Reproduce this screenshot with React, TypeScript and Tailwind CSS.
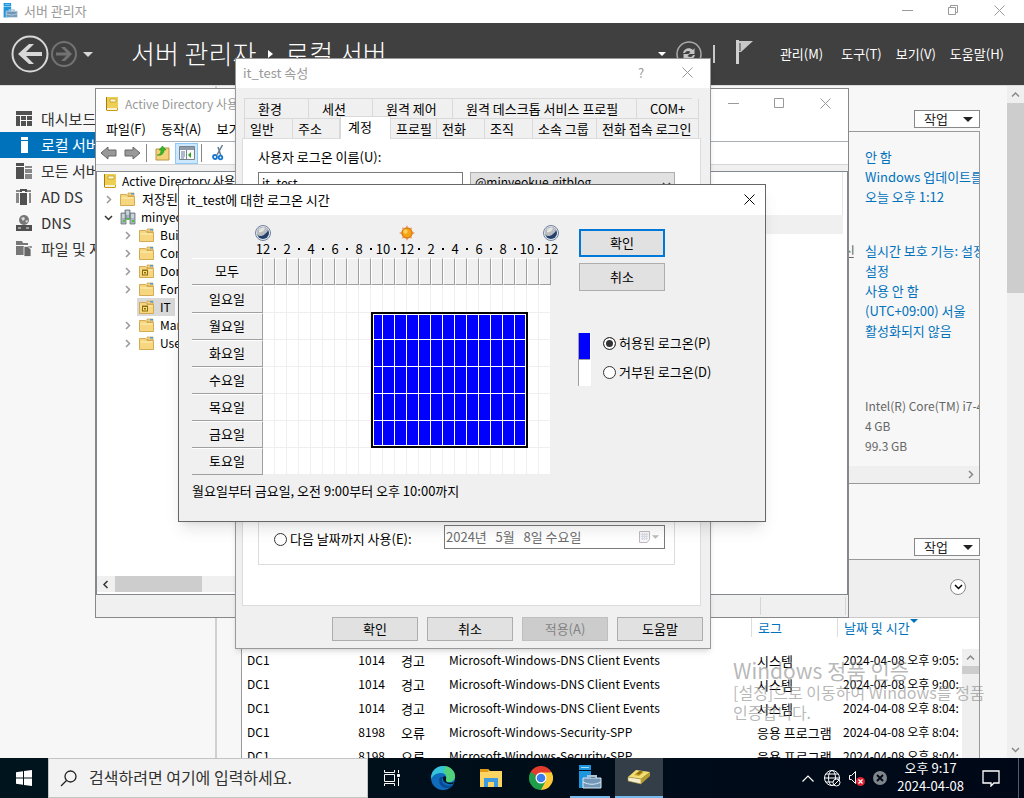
import type { ReactNode } from "react";

type IconProps = { className?: string };

function ServerManagerIcon({ className }: IconProps) {
  return (
    <svg viewBox="0 0 24 24" className={className} aria-hidden="true">
      <path d="M1 0h12v5H1zM1 6h12v7H9v10H1z" fill="#1e96de" />
      <path d="M3 2h8v1H3z" fill="#a9dcf6" />
      <path d="M5 13h18v10H5z" fill="#7197b8" stroke="#dce8f0" />
      <path d="M10 13v-2h8v2" fill="none" stroke="#a8c4d8" strokeWidth="2" />
      <path d="M5 17c6 3 12 3 18 0" fill="none" stroke="#dce8f0" />
    </svg>
  );
}

function BookIcon({ className }: IconProps) {
  return (
    <svg viewBox="0 0 14 16" className={className} aria-hidden="true">
      <path d="M1 1h12v13l-1 1H2l-1-1z" fill="#c99b12" />
      <path d="M2 1h11v11H2z" fill="#edcf56" />
      <path d="M5 3h6v3H5z" fill="#fff6c8" stroke="#b48a12" strokeWidth=".6" />
      <path d="M2 12h10v2H2z" fill="#f8f2d8" />
      <path d="M1 1h1v13H1z" fill="#a87c08" />
    </svg>
  );
}

function FolderIcon({ unit }: { unit?: boolean }) {
  return (
    <svg viewBox="0 0 15 14" className="h-3.5 w-[15px] shrink-0" aria-hidden="true">
      <path d="M8 1h6v3H8z" fill="#f3d27a" stroke="#c99b3c" strokeWidth=".7" />
      <path d="M11 1h3v1.500h-3z" fill="#4b9ae0" />
      <path d="M.5 2.500h6l1.500 2h6.500v9H.5z" fill="#f6d77f" stroke="#cfa347" strokeWidth=".9" />
      <path d="M1.500 5.500h12v1h-12z" fill="#fdeebd" />
      {unit && (
        <>
          <path d="M3 5.500h6v6H3z" fill="#8d6b08" />
          <path d="M4 7h4v3.500H4z" fill="#f3df84" />
          <path d="M5 8h2v1.500H5z" fill="#8d6b08" />
        </>
      )}
    </svg>
  );
}

function DomainIcon() {
  return (
    <svg viewBox="0 0 16 16" className="h-4 w-4 shrink-0" aria-hidden="true">
      <path d="M5 1h5v9H5zM1 4h5v11H1zM10 4h5v11h-5z" fill="#a8b4bb" stroke="#66757e" strokeWidth=".8" />
      <path d="M6 3h3M6 5h3M2 6h3M2 8h3M11 6h3M11 8h3" stroke="#eaf2f5" />
      <path d="M3 11h2v2H3zM12 11h2v2h-2zM7 9h2v2H7z" fill="#4bc72c" />
    </svg>
  );
}

function Caret({ className }: IconProps) {
  return (
    <svg viewBox="0 0 10 5" className={className} aria-hidden="true">
      <path d="M0 0h10L5 5z" fill="currentColor" />
    </svg>
  );
}

function Chevron({ className, d }: { className?: string; d: "up" | "down" | "left" | "right" }) {
  const paths = {
    up: "M1 6.500 4.500 3 8 6.500",
    down: "M1 3 4.500 6.500 8 3",
    left: "M6.500 1 3 4.500 6.500 8",
    right: "M3 1 6.500 4.500 3 8",
  };
  return (
    <svg viewBox="0 0 9 9" className={`h-[9px] w-[9px] shrink-0 ${className ?? ""}`} aria-hidden="true">
      <path d={paths[d]} fill="none" stroke="currentColor" strokeWidth="1.500" />
    </svg>
  );
}

function CaptionGlyph({ kind }: { kind: "min" | "max" | "restore" | "close" }) {
  const paths = {
    min: "M0 5.500h11",
    max: "M.5.500h9v9h-9z",
    restore: "M.5 2.500h7v7h-7zM2.500 2.500v-2h7v7h-2",
    close: "M.5.500l10 10M10.500.500l-10 10",
  };
  return (
    <svg viewBox="0 0 11 11" className="h-[11px] w-[11px]" aria-hidden="true">
      <path d={paths[kind]} fill="none" stroke="currentColor" />
    </svg>
  );
}

function CaptionButton({ label, kind }: { label: string; kind: "min" | "max" | "restore" | "close" }) {
  return (
    <button type="button" aria-label={label} className="flex h-full w-[46px] items-center justify-center">
      <CaptionGlyph kind={kind} />
    </button>
  );
}

function PushButton({
  children,
  primary,
  disabled,
  className,
}: {
  children: ReactNode;
  primary?: boolean;
  disabled?: boolean;
  className: string;
}) {
  return (
    <button
      type="button"
      disabled={disabled}
      className={`w-[86px] pb-0.5 ${
        primary
          ? "border-2 border-[#0078d7] bg-[#e1e1e1]"
          : disabled
            ? "border border-[#bfbfbf] bg-[#cccccc] text-[#838383]"
            : "border border-[#adadad] bg-[#e1e1e1]"
      } ${className}`}
    >
      {children}
    </button>
  );
}

function Radio({ id, name, label, checked }: { id: string; name: string; label: string; checked?: boolean }) {
  return (
    <div className="flex items-center gap-[3px]">
      <input
        type="radio"
        id={id}
        name={name}
        defaultChecked={checked}
        className="h-[13px] w-[13px] appearance-none rounded-full border border-[#333] bg-white checked:bg-[#333] checked:shadow-[inset_0_0_0_2px_white]"
      />
      <label htmlFor={id} className="pb-0.5">
        {label}
      </label>
    </div>
  );
}

/* ---------- server manager ---------- */

const sideIcons: Record<string, ReactNode> = {
  dashboard: <path d="M0 0h16v4H0zM0 5h4v10H0zM5 5h5v4H5zM11 5h5v4h-5zM5 10h5v5H5zM11 10h5v5h-5z" />,
  local: <path d="M5 0h7v3H5zM5 4h7v12H5z" />,
  all: (
    <>
      <path d="M0 0h8v3H0zM0 4h8v12H0z" />
      <path d="M9 3h7v2H9zM9 6h7v4H9zM9 11h7v5H9z" fill="#888" />
    </>
  ),
  ad: (
    <>
      <path d="M0 1h5v2H0zM0 4h3v10H0zM11 1h4v2h-4zM13 4h2v10h-2z" fill="#888" />
      <path d="M4 3V0h7v3H9V2H6v1zM4 4h7v12H4z" />
    </>
  ),
  dns: (
    <>
      <circle cx="8" cy="5" r="5" fill="#777" />
      <path d="M5 3l3-1 1 2-2 2zM9 6l3-1-1 3z" fill="#ddd" />
      <path d="M0 10h16v6H0z" />
      <path d="M2 13h3M10 13h3" stroke="#eee" />
    </>
  ),
  files: (
    <>
      <path d="M0 0h6l1 2h5v2H0zM0 5h8v9H0z" fill="#777" />
      <path d="M9 5h7v2h-2v7H9z" fill="#999" />
      <path d="M8 5.500h4l3 3v7H8z" fill="#666" stroke="#f7f7f7" strokeWidth=".8" />
    </>
  ),
};

const sideItems = [
  { icon: "dashboard", label: "대시보드" },
  { icon: "local", label: "로컬 서버", active: true },
  { icon: "all", label: "모든 서버" },
  { icon: "ad", label: "AD DS" },
  { icon: "dns", label: "DNS" },
  { icon: "files", label: "파일 및 저" },
];

const propertyGroups = [
  { lead: "", link: true, rows: ["안 함", "Windows 업데이트를", "오늘 오후 1:12"] },
  { lead: "신", link: true, rows: ["실시간 보호 기능: 설정", "설정", "사용 안 함", "(UTC+09:00) 서울", "활성화되지 않음"] },
  { lead: "", link: false, rows: ["Intel(R) Core(TM) i7-4", "4 GB", "99.3 GB"] },
];

const events = [
  { id: 1014, level: "경고", source: "Microsoft-Windows-DNS Client Events", log: "시스템", time: "2024-04-08 오후 9:05:" },
  { id: 1014, level: "경고", source: "Microsoft-Windows-DNS Client Events", log: "시스템", time: "2024-04-08 오후 9:00:" },
  { id: 1014, level: "경고", source: "Microsoft-Windows-DNS Client Events", log: "시스템", time: "2024-04-08 오후 8:04:" },
  { id: 8198, level: "오류", source: "Microsoft-Windows-Security-SPP", log: "응용 프로그램", time: "2024-04-08 오후 8:04:" },
  { id: 8198, level: "오류", source: "Microsoft-Windows-Security-SPP", log: "응용 프로그램", time: "2024-04-08 오후 8:04:" },
];

function TaskMenu() {
  return (
    <button
      type="button"
      className="flex h-[18px] w-[66px] items-center justify-between self-end border border-[#888] bg-white pr-[6px] pl-[9px] text-[#222]"
    >
      <span className="pb-0.5">작업</span>
      <Caret className="h-[5px] w-2.5" />
    </button>
  );
}

function ServerManagerHeader() {
  return (
    <header className="flex h-[62px] shrink-0 items-center bg-[#404040] pr-5 pl-[11px] text-white">
      <button type="button" aria-label="뒤로">
        <svg viewBox="0 0 38 38" className="h-[38px] w-[38px]" aria-hidden="true">
          <circle cx="19" cy="19" r="17.500" fill="none" stroke="#d8d8d8" strokeWidth="2" />
          <path d="M7 19 18 9h5l-8 8h16v4H15l8 8h-5z" fill="#d8d8d8" />
        </svg>
      </button>
      <button type="button" aria-label="앞으로" className="ml-0.5">
        <svg viewBox="0 0 26 26" className="h-[26px] w-[26px]" aria-hidden="true">
          <circle cx="13" cy="13" r="12" fill="none" stroke="#727272" strokeWidth="2" />
          <path d="M21 13 14 6h-4l5.500 5.500H5v3h10.500L10 20h4z" fill="#727272" />
        </svg>
      </button>
      <Caret className="ml-1.5 h-[5px] w-2.5 text-[#d8d8d8]" />
      <h1 className="ml-[38px] flex items-center gap-3 pb-1 text-[26px] font-light whitespace-nowrap">
        서버 관리자
        <svg viewBox="0 0 5 8" className="mt-1 h-2 w-[5px]" aria-hidden="true">
          <path d="M0 0l5 4-5 4z" fill="white" />
        </svg>
        로컬 서버
      </h1>
      <div className="ml-auto flex items-center">
        <Caret className="h-1 w-2" />
        <svg viewBox="0 0 26 26" className="ml-2.5 h-[26px] w-[26px]" aria-hidden="true">
          <circle cx="13" cy="13" r="12" fill="none" stroke="#aaa" strokeWidth="1.500" />
          <path d="M7 12c1-5 7-6 10-3l1.500-2v6h-6l2-2c-2-2-5-1-5.500 1zM19 14c-1 5-7 6-10 3l-1.500 2v-6h6l-2 2c2 2 5 1 5.500-1z" fill="#c4c4c4" />
        </svg>
        <span className="ml-[11px] h-[18px] w-0.5 bg-[#c8c8c8]" />
        <svg viewBox="0 0 18 24" className="mb-1 ml-[21px] h-6 w-[18px]" aria-hidden="true">
          <path d="M0 0h3v24H0z" fill="#d0d0d0" />
          <path d="M3 1h14L5 12H3z" fill="#c8c8c8" />
          <path d="M4 3v8" stroke="#404040" />
        </svg>
        <nav className="ml-[26px] flex gap-3.5 pb-0.5 whitespace-nowrap">
          <button type="button" className="mr-1">관리(M)</button>
          <button type="button">도구(T)</button>
          <button type="button">보기(V)</button>
          <button type="button">도움말(H)</button>
        </nav>
      </div>
    </header>
  );
}

function ServerManager() {
  return (
    <section className="flex h-full flex-col overflow-hidden bg-[#f7f7f7]">
      <div className="flex h-[23px] shrink-0 items-center bg-white pr-0.5 pb-0.5 pl-[3px] text-[#999]">
        <ServerManagerIcon className="h-[15px] w-[15px]" />
        <span className="ml-1.5">서버 관리자</span>
        <div className="ml-auto flex h-full">
          <CaptionButton label="최소화" kind="min" />
          <CaptionButton label="이전 크기로" kind="restore" />
          <CaptionButton label="닫기" kind="close" />
        </div>
      </div>
      <ServerManagerHeader />
      <div className="flex min-h-0 flex-1 border-t border-[#ddd]">
        <nav className="w-[217px] shrink-0 border-r-2 border-[#d0d0d0] pt-5 text-[15px]">
          {sideItems.map((item) => (
            <a
              key={item.label}
              href="#"
              className={`flex h-[26px] items-center gap-[9px] pl-4 whitespace-nowrap ${
                item.active ? "bg-[#0072bc] text-white" : "text-[#333]"
              }`}
            >
              <svg
                viewBox="0 0 16 16"
                className={`h-4 w-4 shrink-0 ${item.active ? "fill-white" : "fill-[#505050]"}`}
                aria-hidden="true"
              >
                {sideIcons[item.icon]}
              </svg>
              <span className="pb-0.5">{item.label}</span>
            </a>
          ))}
        </nav>

        <main className="flex min-w-0 flex-1 flex-col overflow-hidden pt-6 pr-[27px] pl-6">
          <TaskMenu />
          <div className="mt-[3px] flex h-[353px] shrink-0 flex-col border border-[#999]">
            <div className="flex flex-1 flex-col items-end overflow-hidden pt-[15px] leading-5">
              {propertyGroups.map((group, i) => (
                <div key={i} className={`flex w-[136px] ${i === 1 ? "mt-[34px] mb-[55px]" : ""}`}>
                  <span className="w-[22px] shrink-0 text-[#666]">{group.lead}</span>
                  <div className={`whitespace-nowrap ${group.link ? "text-[#0072bc]" : "text-xs leading-5 text-[#666]"}`}>
                    {group.rows.map((row) => (
                      <p key={row}>{row}</p>
                    ))}
                  </div>
                </div>
              ))}
            </div>
            <div className="flex h-[17px] shrink-0 items-center justify-end bg-[#efefef] pr-1">
              <Chevron d="right" className="text-[#888]" />
            </div>
          </div>

          <div className="mt-[54px] flex flex-col">
            <TaskMenu />
          </div>
          <div className="relative mt-[3px] flex-1 border border-b-0 border-[#999] bg-white">
            <div className="flex h-[58px] items-center justify-end border-b border-[#c8c8c8] bg-[#efefef] pr-[13px] pb-1">
              <button
                type="button"
                aria-label="펼치기"
                className="flex h-4 w-4 items-center justify-center rounded-full border border-[#888] bg-white"
              >
                <Chevron d="down" />
              </button>
            </div>
            <table className="w-full table-fixed text-left whitespace-nowrap">
              <colgroup>
                <col className="w-[60px]" />
                <col className="w-[83px]" />
                <col className="w-12" />
                <col />
                <col className="w-[86px]" />
                <col className="w-[152px]" />
              </colgroup>
              <thead className="text-[#0072bc]">
                <tr className="h-[31px] align-top">
                  <th />
                  <th />
                  <th />
                  <th />
                  <th className="pl-2.5 font-normal">
                    <span className="block border-l border-[#ddd] pl-1.5">로그</span>
                  </th>
                  <th className="pl-2.5 font-normal">
                    <span className="flex border-l border-[#ddd] pl-1.5">
                      날짜 및 시간
                      <Caret className="mt-px h-1 w-2" />
                    </span>
                  </th>
                </tr>
              </thead>
              <tbody>
                {events.map((event, i) => (
                  <tr key={i} className="h-6 *:pb-0.5">
                    <td className="pl-[5px] text-xs">DC1</td>
                    <td className="text-right text-xs">{event.id}</td>
                    <td className="pl-4">{event.level}</td>
                    <td className="pl-4 text-xs">{event.source}</td>
                    <td className="pl-4">{event.log}</td>
                    <td className="overflow-hidden pl-4 text-xs">{event.time}</td>
                  </tr>
                ))}
              </tbody>
            </table>
            <div className="absolute top-[89px] right-0 bottom-0 flex w-[17px] flex-col items-center bg-[#efefef]">
              <Chevron d="up" className="my-1 text-[#888]" />
              <span className="h-2 w-full bg-[#cdcdcd]" />
            </div>
          </div>
        </main>

        <div className="flex w-[17px] shrink-0 flex-col items-center bg-[#efefef]">
          <Chevron d="up" className="my-1 text-[#888]" />
          <span className="h-[190px] w-full bg-[#cdcdcd]" />
          <Chevron d="down" className="mt-auto mb-1 text-[#888]" />
        </div>
      </div>
    </section>
  );
}

/* ---------- active directory console ---------- */

const containers = [
  { label: "Builtin" },
  { label: "Computers" },
  { label: "Domain Controllers", unit: true },
  { label: "ForeignSecurityPrincipals" },
  { label: "IT", unit: true, selected: true },
  { label: "Managed Service Accounts" },
  { label: "Users" },
];

function ConsoleToolbar() {
  return (
    <div className="flex h-[23px] shrink-0 items-center border-b border-[#d5d5d5] pl-1">
      <svg viewBox="0 0 18 16" className="h-4 w-[18px]" aria-hidden="true">
        <path d="M1 8l7-6v3h8v6H8v3z" fill="#999" stroke="#666" />
      </svg>
      <svg viewBox="0 0 18 16" className="ml-[5px] h-4 w-[18px]" aria-hidden="true">
        <path d="M17 8l-7-6v3H2v6h8v3z" fill="#999" stroke="#666" />
      </svg>
      <span className="ml-[5px] h-[18px] w-px bg-[#888]" />
      <svg viewBox="0 0 16 16" className="ml-2 h-4 w-4" aria-hidden="true">
        <path d="M1 4h6l1-1h6v12H1z" fill="#f3d27a" stroke="#bf9440" />
        <path d="M2 10c3 0 4-2 4-5H4l3.500-4L11 5H9c0 4-3 6-7 5z" fill="#35b52a" stroke="#1d861a" strokeWidth=".5" />
      </svg>
      <span className="ml-1 flex h-[21px] w-[23px] items-center justify-center border border-[#90c8f6] bg-[#cce8ff]">
        <svg viewBox="0 0 16 14" className="h-3.5 w-4" aria-hidden="true">
          <path d="M.5.500h15v13H.5z" fill="#f8f8f8" stroke="#7a828c" />
          <path d="M1 1h14v3H1z" fill="#8e9aa8" />
          <path d="M2 6h4M2 8h4M2 10h4M2 12h3" stroke="#5c7ea8" />
          <path d="M7.500 4v9" stroke="#7a828c" />
          <path d="M12 6v6L9 9z" fill="#32a31f" />
        </svg>
      </span>
      <span className="ml-[3px] h-[18px] w-px bg-[#888]" />
      <svg viewBox="0 0 12 16" className="ml-2.5 h-4 w-3" aria-hidden="true">
        <path d="M10.500 0 5 10M6 2l3 9" stroke="#667c92" strokeWidth="1.500" />
        <circle cx="3" cy="12" r="2" fill="none" stroke="#1877d0" strokeWidth="1.800" />
        <circle cx="8.500" cy="12.500" r="1.800" fill="none" stroke="#1877d0" strokeWidth="1.800" />
      </svg>
      <span className="ml-[11px] h-[18px] w-px bg-[#888]" />
    </div>
  );
}

function DirectoryWindow() {
  return (
    <section className="absolute top-[88px] left-[95px] flex h-[530px] w-[754px] flex-col border border-[#888] bg-[#f0f0f0]">
      <div className="flex h-[29px] shrink-0 items-center bg-white pl-[9px] text-[#999]">
        <BookIcon className="h-4 w-3.5" />
        <span className="ml-1.5 text-xs">Active Directory 사용자</span>
        <div className="ml-auto flex h-full">
          <CaptionButton label="최소화" kind="min" />
          <CaptionButton label="최대화" kind="max" />
          <CaptionButton label="닫기" kind="close" />
        </div>
      </div>
      <nav className="flex h-6 shrink-0 items-center gap-[15px] border-b border-[#a8b0b8] bg-white pb-0.5 pl-2.5">
        <button type="button">파일(F)</button>
        <button type="button">동작(A)</button>
        <button type="button">보기</button>
      </nav>
      <div className="shrink-0 bg-white">
        <ConsoleToolbar />
      </div>
      <div className="mt-1.5 flex min-h-0 flex-1 border-y border-[#828790] bg-white">
        <div className="flex w-[200px] shrink-0 flex-col overflow-hidden border-x border-[#828790] pb-0.5">
          <ul className="flex-1 text-xs whitespace-nowrap *:h-[18px]">
            <li className="flex items-center gap-[5px] pl-1.5">
              <BookIcon className="h-4 w-3.5 shrink-0" />
              Active Directory 사용자
            </li>
            <li className="flex items-center gap-[7px] pl-[7px] text-[13px]">
              <Chevron d="right" className="text-[#999]" />
              <FolderIcon />
              저장된 쿼리
            </li>
            <li className="flex items-center gap-[7px] pl-[7px]">
              <Chevron d="down" className="text-[#333]" />
              <DomainIcon />
              <span className="-ml-0.5">minyeokue</span>
            </li>
            {containers.map((item) => (
              <li key={item.label} className="flex items-center pl-[26px]">
                <Chevron d="right" className={item.selected ? "invisible" : "text-[#999]"} />
                <span
                  className={`ml-[5px] flex h-full items-center gap-1.5 pr-1 pl-0.5 ${
                    item.selected ? "bg-[#d9d9d9]" : ""
                  }`}
                >
                  <FolderIcon unit={item.unit} />
                  {item.label}
                </span>
              </li>
            ))}
          </ul>
          <div className="flex h-4 shrink-0 items-center bg-[#f0f0f0] pl-1">
            <Chevron d="left" className="text-[#333]" />
            <span className="ml-[5px] h-full w-[87px] bg-[#cdcdcd]" />
          </div>
        </div>
        <div className="flex-1 border-r border-[#828790]">
          <div className="mr-1 h-[43px] border-r border-[#e5e5e5]" />
          <div className="mr-1 h-[19px] bg-[#f0f0f0]" />
        </div>
      </div>
      <div className="flex h-[22px] shrink-0 justify-end py-0.5 pr-0.5">
        <span className="w-[86px] border-x border-[#d5d5d5]" />
      </div>
    </section>
  );
}

/* ---------- user properties ---------- */

const backTabs = [
  { label: "환경", width: "w-16" },
  { label: "세션", width: "w-16" },
  { label: "원격 제어", width: "w-20" },
  { label: "원격 데스크톱 서비스 프로필", width: "w-[184px]" },
  { label: "COM+", width: "w-[62px]" },
];

const frontTabs = [
  { label: "일반", width: "w-12" },
  { label: "주소", width: "w-[47px]" },
  { label: "계정", width: "w-[51px]", active: true },
  { label: "프로필", width: "w-[46px]" },
  { label: "전화", width: "w-12" },
  { label: "조직", width: "w-12" },
  { label: "소속 그룹", width: "w-16" },
  { label: "전화 접속 로그인", width: "w-[102px]" },
];

function PropertiesDialog() {
  return (
    <section className="absolute top-[58px] left-[235px] flex h-[591px] w-[476px] flex-col border border-[#999] bg-[#f0f0f0] shadow-md">
      <div className="flex h-[29px] shrink-0 items-center bg-white pb-0.5 pl-[7px] text-[#999]">
        it_test 속성
        <div className="ml-auto flex h-full">
          <button type="button" aria-label="도움말" className="w-[46px]">?</button>
          <CaptionButton label="닫기" kind="close" />
        </div>
      </div>

      <div className="flex min-h-0 flex-1 flex-col px-1.5 pt-2.5 pb-[7px]">
        <div className="mr-3 ml-0.5 flex h-5 shrink-0 border-t border-l border-[#d9d9d9]">
          {backTabs.map((tab) => (
            <button
              key={tab.label}
              type="button"
              className={`shrink-0 border-r border-[#d9d9d9] pb-0.5 pl-[13px] text-left whitespace-nowrap ${tab.width}`}
            >
              {tab.label}
            </button>
          ))}
        </div>
        <div className="mr-3 ml-0.5 flex h-5 shrink-0 items-end border-l border-[#d9d9d9]">
          {frontTabs.map((tab) => (
            <button
              key={tab.label}
              type="button"
              className={`relative shrink-0 border-t border-r border-[#d9d9d9] text-left whitespace-nowrap ${tab.width} ${
                tab.active ? "-mb-px h-[23px] border-l bg-white pb-1.5 pl-[7px]" : "h-5 pb-0.5 pl-[5px]"
              }`}
            >
              {tab.label}
            </button>
          ))}
        </div>

        <div className="mr-[3px] flex min-h-0 flex-1 flex-col border border-[#dcdcdc] bg-white px-[15px] pt-2 pb-10">
          <label htmlFor="logon-name">사용자 로그온 이름(U):</label>
          <div className="mt-1.5 flex gap-[7px]">
            <input
              id="logon-name"
              type="text"
              defaultValue="it_test"
              className="h-6 w-[205px] border border-[#7a7a7a] px-[3px] pb-1 text-xs"
            />
            <div className="relative w-[205px]">
              <select
                aria-label="도메인"
                className="h-6 w-full appearance-none border border-[#adadad] bg-[#e1e1e1] px-1 pb-1 text-xs"
              >
                <option>@minyeokue.gitblog</option>
              </select>
              <Chevron d="down" className="absolute top-2 right-1 text-[#444]" />
            </div>
          </div>
          <div className="mt-auto flex h-16 w-[417px] items-start justify-between border border-t-0 border-[#dcdcdc] pt-6 pr-[9px] pl-[15px]">
            <div className="pt-1">
              <Radio id="expires-on" name="expires" label="다음 날짜까지 사용(E):" />
            </div>
            <div className="flex h-6 w-[221px] items-center border border-[#7a7a7a] pr-[5px]">
              <input
                type="text"
                aria-label="만료 날짜"
                disabled
                defaultValue={"2024년   5월   8일 수요일"}
                className="min-w-0 flex-1 px-px pb-0.5 text-[#6d6d6d]"
              />
              <svg viewBox="0 0 12 13" className="h-[13px] w-3" aria-hidden="true">
                <path d="M.5.500h10v8l-2.500 3H.5z" fill="#f6f6fa" stroke="#c3b9bd" />
                <path d="M2 3.500h7M2 5.500h7M2 7.500h7M3.500 2v7M5.500 2v7M7.500 2v7" stroke="#d3d5df" strokeWidth=".7" />
              </svg>
              <Caret className="ml-px h-1 w-[7px] text-[#bbb]" />
            </div>
          </div>
        </div>

        <div className="mt-[11px] flex shrink-0 justify-end gap-[9px] pr-px">
          <PushButton className="h-6">확인</PushButton>
          <PushButton className="h-6">취소</PushButton>
          <PushButton className="h-6" disabled>
            적용(A)
          </PushButton>
          <PushButton className="h-6">도움말</PushButton>
        </div>
      </div>
    </section>
  );
}

/* ---------- logon hours ---------- */

const days = ["일요일", "월요일", "화요일", "수요일", "목요일", "금요일", "토요일"];
const hours = Array.from({ length: 24 }, (_, i) => i);
const hourLabels = Array.from({ length: 25 }, (_, i) => (i % 2 ? "·" : String(i % 12 || 12)));

function isAllowed(day: number, hour: number) {
  return day >= 1 && day <= 5 && hour >= 9 && hour < 22;
}

function MoonIcon() {
  return (
    <svg viewBox="0 0 16 16" className="h-4 w-4" aria-hidden="true">
      <circle cx="8" cy="8" r="7.500" fill="#e5edf6" stroke="#71819c" />
      <circle cx="8" cy="8" r="6" fill="#263f6b" />
      <path d="M2.200 9.500C.5 4 6 0 11 2.500c3 2 2.500 4-1 6.500-2 2-5 3-7.800.500z" fill="#b9bdc0" />
      <path d="M4 5c1-2 4-3 6-2-1 3-3 5-6 4z" fill="#e3e3df" />
    </svg>
  );
}

function SunIcon() {
  return (
    <svg viewBox="0 0 16 16" className="h-4 w-4" aria-hidden="true">
      <path
        d="M8 0l1.500 3L13 2.500 12.500 6 16 8l-3.500 2 .5 3.500-3.500-.5L8 16l-1.500-3-3.500.5.5-3.500L0 8l3.500-2L3 2.500l3.500.5z"
        fill="#efa36b"
      />
      <circle cx="8" cy="8" r="5" fill="#f5a312" stroke="#c9730d" />
      <circle cx="6.500" cy="6.500" r="2.200" fill="#ffcf55" />
    </svg>
  );
}

function DayButton({ children, className }: { children: ReactNode; className: string }) {
  return (
    <button
      type="button"
      className={`block w-full border-t border-r border-b border-t-white border-r-[#a0a0a0] border-b-[#a0a0a0] pb-0.5 ${className}`}
    >
      {children}
    </button>
  );
}

function HoursGrid() {
  return (
    <div className="w-[359px] shrink-0">
      <div className="-mr-2 ml-[63px] flex justify-between">
        <MoonIcon />
        <SunIcon />
        <MoonIcon />
      </div>
      <div className="-mr-1.5 ml-[65px] flex leading-[15px]">
        {hourLabels.map((label, i) => (
          <span key={i} className="flex h-[17px] w-3 shrink-0 justify-center">
            {label === "·" ? <i className="mt-[7px] h-0.5 w-0.5 bg-black" /> : label}
          </span>
        ))}
      </div>
      <div className="relative">
        <table className="w-full table-fixed border-collapse">
          <colgroup>
            <col className="w-[71px]" />
          </colgroup>
          <tbody>
            <tr>
              <th className="p-0 font-normal">
                <DayButton className="h-[27px]">모두</DayButton>
              </th>
              {hours.map((hour) => (
                <td key={hour} className="p-0">
                  <button
                    type="button"
                    aria-label={`${hour}시`}
                    className="block h-[27px] w-3 border border-t-white border-r-[#a0a0a0] border-b-[#a0a0a0] border-l-white"
                  />
                </td>
              ))}
            </tr>
            {days.map((day, d) => (
              <tr key={day}>
                <th className="p-0 font-normal">
                  <DayButton className={d === 0 ? "h-7" : "h-[27px]"}>{day}</DayButton>
                </th>
                {hours.map((hour) => (
                  <td key={hour} className="p-0">
                    <span
                      className={`block w-3 border-r border-b ${d === 0 ? "h-7" : "h-[27px]"} ${
                        isAllowed(d, hour) ? "border-white bg-[#0000ff]" : "border-[#efefef] bg-white"
                      }`}
                    />
                  </td>
                ))}
              </tr>
            ))}
          </tbody>
        </table>
        {/* selection frame, Mon-Fri 9:00-22:00 */}
        <span className="absolute top-[54px] left-[179px] h-[136px] w-[157px] border-2 border-black">
          <span className="block h-full border border-white" />
        </span>
      </div>
      <p className="mt-1.5 whitespace-nowrap">월요일부터 금요일, 오전 9:00부터 오후 10:00까지</p>
    </div>
  );
}

function LogonHoursDialog() {
  return (
    <section className="absolute top-[184px] left-[178px] flex h-[338px] w-[588px] flex-col border border-[#666] bg-[#f0f0f0] shadow-lg">
      <div className="flex h-[30px] shrink-0 items-center justify-between bg-white pb-0.5 pl-2">
        it_test에 대한 로그온 시간
        <button type="button" aria-label="닫기" className="flex h-full items-center px-2.5">
          <CaptionGlyph kind="close" />
        </button>
      </div>
      <div className="flex pt-2.5 pl-[13px]">
        <HoursGrid />
        <div className="ml-7 flex flex-col gap-1.5 pt-1">
          <PushButton primary className="h-7">
            확인
          </PushButton>
          <PushButton className="h-7">취소</PushButton>
          <div className="mt-9 -ml-px flex gap-3">
            <div className="h-[53px] w-[13px] border-l border-[#a0a0a0] bg-white">
              <div className="mr-px h-[27px] border-b border-[#a0a0a0] bg-[#0000ff]" />
            </div>
            <div className="flex flex-col gap-2 whitespace-nowrap">
              <Radio id="logon-allowed" name="logon" label="허용된 로그온(P)" checked />
              <Radio id="logon-denied" name="logon" label="거부된 로그온(D)" />
            </div>
          </div>
        </div>
      </div>
    </section>
  );
}

/* ---------- taskbar ---------- */

function EdgeIcon() {
  return (
    <svg viewBox="0 0 24 24" className="h-6 w-6" aria-hidden="true">
      <circle cx="12" cy="12" r="12" fill="#0f6cbd" />
      <path d="M0 11C1 4 6 0 12 0c7 0 12 5 12 10 0 4-3 6-6 6-3 0-4-1-3-3 1-3-1-6-5-6C6 7 2 9 0 13z" fill="#36c5d8" />
      <path d="M14 0c6 1 10 5 10 10 0 4-3 6-6 6-3 0-4-1-3-3 1-3 0-5-2-6z" fill="#5ad45b" opacity=".75" />
      <path d="M9 11c-3 6 2 12 8 11 2 0 4-2 5-3-5 2-10 0-11-4-.3-2 0-3 1-4z" fill="#0a4a94" />
      <path d="M12 11c-1 4 3 8 10 7l1-2c-2 1-9 2-8-3 1-2-1-4-3-2z" fill="#02151f" />
    </svg>
  );
}

function ExplorerIcon() {
  return (
    <svg viewBox="0 0 22 20" className="h-5 w-[22px]" aria-hidden="true">
      <path d="M0 1h8l2 2h12v16H0z" fill="#fcd462" />
      <path d="M0 1h8l1 2-1 1H0z" fill="#e19a16" />
      <path d="M4 10h14v9h-4v-5H8v5H4z" fill="#3c9be0" />
    </svg>
  );
}

function ChromeIcon() {
  return (
    <svg viewBox="0 0 24 24" className="h-6 w-6" aria-hidden="true">
      <path d="M12 12 1.600 6A12 12 0 0 1 22.400 6z" fill="#e33b2e" />
      <path d="M12 12 22.400 6A12 12 0 0 1 12 24z" fill="#fcc934" />
      <path d="M12 12v12A12 12 0 0 1 1.600 6z" fill="#1e9e4a" />
      <path d="M12 6.500h10.700l-6 8.200z" fill="#fcc934" />
      <path d="M7.200 14.700 1.600 6 12 6.500z" fill="#e33b2e" />
      <path d="M7.200 14.700 1.600 6l5 3z" fill="#1e9e4a" />
      <path d="M16.800 14.700 12 24l-1-7z" fill="#1e9e4a" />
      <circle cx="12" cy="12" r="5.500" fill="white" />
      <circle cx="12" cy="12" r="4.300" fill="#3b7ded" />
    </svg>
  );
}

function DirectoryTaskIcon() {
  return (
    <svg viewBox="0 0 24 16" className="h-4 w-6" aria-hidden="true">
      <path d="M1 8 9 1l14 2-9 7z" fill="#f2de73" />
      <path d="M7 6l5-4 5 1-5 4z" fill="#c9a52a" />
      <path d="M9 5l4-3 3 .5-4 3z" fill="#8a6a10" />
      <path d="M1 8l13 2v5L1 12z" fill="#f5eecb" stroke="#a38930" strokeWidth=".6" />
      <path d="M14 10l9-7v4l-9 8z" fill="#b79c2e" />
    </svg>
  );
}

function Taskbar() {
  return (
    <footer className="relative z-10 flex h-10 shrink-0 items-stretch bg-linear-to-r from-[#00141d] to-[#000817] text-white">
      <button type="button" aria-label="시작" className="flex w-12 items-center justify-center">
        <svg viewBox="0 0 16 16" className="h-4 w-4 fill-white" aria-hidden="true">
          <path d="M0 2.300 7 1.300v6.200H0zM8 1.100 16 0v7.500H8zM0 8.500h7v6.200l-7-1zM8 8.500h8V16l-8-1.100z" />
        </svg>
      </button>
      <label className="flex w-80 items-center gap-3 border border-[#c4c4c4] bg-[#f2f2f2] pl-[11px] text-[#333]">
        <svg viewBox="0 0 17 17" className="h-[17px] w-[17px] shrink-0" aria-hidden="true">
          <circle cx="10.500" cy="6.500" r="5.500" fill="none" stroke="#222" strokeWidth="1.300" />
          <path d="M6.500 10.500 1 16" stroke="#222" strokeWidth="1.300" />
        </svg>
        <input
          type="text"
          aria-label="검색"
          placeholder="검색하려면 여기에 입력하세요."
          className="min-w-0 flex-1 bg-transparent pb-0.5 text-base outline-none placeholder:text-[#333]"
        />
      </label>
      <div className="flex *:flex *:w-12 *:items-center *:justify-center">
        <button type="button" aria-label="작업 보기">
          <svg viewBox="0 0 17 16" className="h-4 w-[17px]" fill="none" stroke="white" aria-hidden="true">
            <path d="M.5 0v2.500h10V0M.5 16v-2.500h10V16M.5 4.500h10v7H.5zM14.500 0v3M14.500 8v8" />
            <path d="M13.500 4.500h2v2h-2z" fill="white" />
          </svg>
        </button>
        <button type="button" aria-label="Edge" className="ml-[3px]">
          <EdgeIcon />
        </button>
        <button type="button" aria-label="탐색기">
          <ExplorerIcon />
        </button>
        <button type="button" aria-label="Chrome" className="ml-0.5">
          <ChromeIcon />
        </button>
      </div>
      <button
        type="button"
        aria-label="서버 관리자"
        className="ml-[5px] flex w-10 items-center justify-center border-b-2 border-[#76b9ed]"
      >
        <ServerManagerIcon className="h-6 w-6" />
      </button>
      <button
        type="button"
        aria-label="Active Directory"
        className="ml-[5px] flex w-12 items-center justify-center border-b-2 border-[#76b9ed] bg-[#333e48]"
      >
        <DirectoryTaskIcon />
      </button>

      <div className="ml-auto flex items-center">
        <svg viewBox="0 0 12 7" className="h-[7px] w-3" fill="none" stroke="white" aria-hidden="true">
          <path d="M.5 6.500 6 1l5.500 5.500" strokeWidth="1.200" />
        </svg>
        <svg viewBox="0 0 17 17" className="ml-2.5 h-[17px] w-[17px]" fill="none" stroke="white" aria-hidden="true">
          <circle cx="8" cy="8" r="7.500" />
          <ellipse cx="8" cy="8" rx="3.500" ry="7.500" />
          <path d="M.5 8h15M2 4h12M2 12h8" />
          <circle cx="12.500" cy="12.500" r="3.500" fill="#000a14" />
          <path d="M10 15l5-5" />
        </svg>
        <svg viewBox="0 0 16 16" className="ml-2 h-4 w-4" aria-hidden="true">
          <path d="M.5 5.500h2l4-4v12l-4-4h-2z" fill="none" stroke="white" />
          <circle cx="11.500" cy="11.500" r="4.500" fill="#dd2130" />
          <path d="M9.500 9.500l4 4M13.500 9.500l-4 4" stroke="white" strokeWidth="1.200" />
        </svg>
        <svg viewBox="0 0 14 14" className="ml-2 h-3.5 w-3.5" aria-hidden="true">
          <circle cx="7" cy="7" r="7" fill="#80868c" />
          <path d="M4 4l6 6M10 4l-6 6" stroke="#000b18" strokeWidth="2" />
        </svg>
        <div className="ml-2.5 pb-0.5 text-center text-[13px] leading-[18px]">
          <p>오후 9:17</p>
          <p>2024-04-08</p>
        </div>
        <svg viewBox="0 0 18 17" className="ml-[18px] h-[17px] w-[18px]" fill="none" stroke="white" aria-hidden="true">
          <path d="M1 1h16v12h-5l-3 3v-3H1z" strokeWidth="1.300" />
        </svg>
        <span className="mr-[5px] ml-[18px] h-10 w-px bg-[#555d66]" />
      </div>
    </footer>
  );
}

export default function App() {
  return (
    <div className="flex h-screen flex-col overflow-hidden font-['Noto_Sans_CJK_KR',sans-serif] text-[13px] leading-[19px] text-black">
      <div className="relative min-h-0 flex-1 overflow-hidden">
        <ServerManager />
        <DirectoryWindow />
        <PropertiesDialog />
        <LogonHoursDialog />
      </div>
      <Taskbar />
      <aside className="pointer-events-none absolute right-[38px] bottom-[76px] z-20 w-[253px] whitespace-nowrap text-[#888]/60">
        <p className="text-[21px] leading-6">Windows 정품 인증</p>
        <p className="text-base leading-5">[설정]으로 이동하여 Windows를 정품</p>
        <p className="text-base leading-5">인증합니다.</p>
      </aside>
    </div>
  );
}
